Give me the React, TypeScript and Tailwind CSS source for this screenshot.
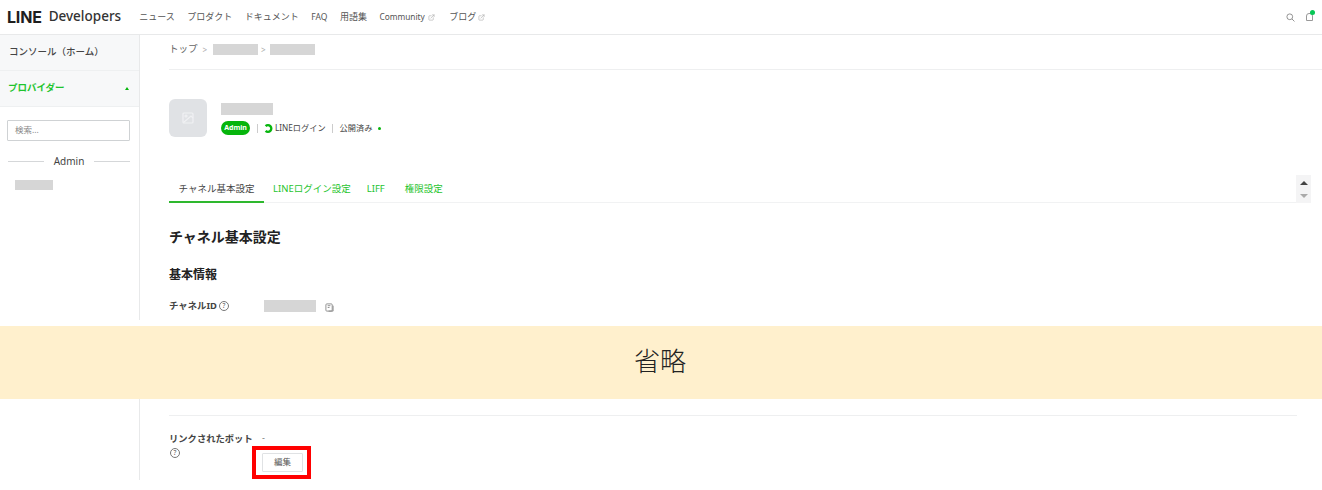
import { ExternalLink } from "lucide-react"

const font = { fontFamily: '"Noto Sans", "Noto Sans CJK JP", sans-serif' }

function Mask({ className }: { className: string }) {
    return <div className={`bg-[#d6d6d6] ${className}`} />
}

function Help({ className = "" }: { className?: string }) {
    return (
        <span className={`flex size-[10px] items-center justify-center rounded-full border border-[#777] text-[6.5px] leading-none text-[#555] ${className}`}>
            ?
        </span>
    )
}

function Header() {
    const links = ["ニュース", "プロダクト", "ドキュメント"]
    return (
        <header className="flex h-[35px] items-center border-b border-[#e8e9ea] bg-white pl-[7px] pr-[9px]">
            <span className="text-[16px] font-bold leading-none tracking-[-0.2px] text-[#1e1e1e] [font-family:Inter,sans-serif]">LINE</span>
            <span className="ml-[7px] text-[13.5px] font-medium leading-none text-[#333]">Developers</span>
            <nav className="ml-[18px] flex items-center gap-[12.5px] text-[9px] text-[#555]">
                {links.map((l) => (
                    <span key={l}>{l}</span>
                ))}
                <span className="text-[8.5px]">FAQ</span>
                <span>用語集</span>
                <span className="flex items-center gap-[3px] text-[8.3px]">
                    Community <ExternalLink className="size-[7px] text-[#aaa]" />
                </span>
                <span className="ml-[2px] flex items-center gap-[2px]">
                    ブログ <ExternalLink className="size-[7px] text-[#aaa]" />
                </span>
            </nav>
            <div className="ml-auto flex items-center gap-[11px]">
                <svg width="9" height="9" viewBox="0 0 10 10" fill="none" stroke="#888" strokeWidth="1">
                    <circle cx="4.2" cy="4.2" r="3.2" />
                    <path d="M6.6 6.6 9.4 9.4" />
                </svg>
                <span className="relative block h-[8px] w-[7px] rounded-t-[3px] border border-[#999]">
                    <span className="absolute -right-[3px] -top-[4px] size-[5px] rounded-full bg-[#06c755]" />
                </span>
            </div>
        </header>
    )
}

function Sidebar() {
    return (
        <aside className="w-[140px] shrink-0 border-r border-[#e8e9ea]">
            <div className="flex h-[36px] items-center border-b border-[#eef0f1] bg-[#f7f8f9] pl-[9px] text-[9.5px] font-medium text-[#444]">
                コンソール（ホーム）
            </div>
            <div className="flex h-[36px] items-center justify-between border-b border-[#eef0f1] bg-[#f7f8f9] pl-[8px] pr-[10px] text-[9.5px] font-bold text-[#1fc42e]">
                プロバイダー
                <span className="h-0 w-0 border-x-[2.5px] border-b-[3px] border-x-transparent border-b-[#06b50c]" />
            </div>
            <div className="ml-[7px] mr-[9px] mt-[13px] flex h-[21px] items-center rounded-[1px] border border-[#cfd2d4] pl-[7px] text-[8.5px] text-[#888]">
                検索...
            </div>
            <div className="ml-[8px] mr-[9px] mt-[13px] flex items-center gap-[10px] text-[10px] text-[#444]">
                <span className="h-px flex-1 bg-[#d5d7d9]" />
                Admin
                <span className="h-px flex-1 bg-[#d5d7d9]" />
            </div>
            <Mask className="ml-[15px] mt-[11px] h-[10px] w-[38px]" />
        </aside>
    )
}

function TopMain() {
    return (
        <main className="min-w-0 flex-1 pl-[29px]">
            <div className="flex h-[35px] items-center border-b border-[#eeeff0] pb-[5px] text-[9.5px] text-[#666]">
                <span>トップ</span>
                <span className="ml-[5px] text-[8px] text-[#aaa]">&gt;</span>
                <Mask className="ml-[6px] h-[11px] w-[45px]" />
                <span className="ml-[3px] text-[8px] text-[#aaa]">&gt;</span>
                <Mask className="ml-[4px] h-[11px] w-[45px]" />
            </div>
            <div className="pr-[11px]">
                <div className="mt-[29px] flex items-start gap-[14px]">
                    <div className="flex size-[38px] items-center justify-center rounded-[6px] bg-[#e0e2e5]">
                        <svg width="12" height="12" viewBox="0 0 12 12" fill="none" stroke="#f0f1f3" strokeWidth="1.2">
                            <rect x="1" y="1" width="10" height="10" rx="1" />
                            <circle cx="4" cy="4" r="1" />
                            <path d="M1.5 10.5 9 4l2 2" />
                        </svg>
                    </div>
                    <div className="mt-[4px] flex flex-col gap-[6px]">
                        <Mask className="h-[12px] w-[52px]" />
                        <div className="flex h-[14px] items-center text-[8.2px] text-[#444]">
                            <span className="flex h-[14px] w-[29px] items-center justify-center rounded-full bg-[#06b50c] text-[7px] font-bold text-white">Admin</span>
                            <span className="ml-[7px] h-[9px] w-px bg-[#ccc]" />
                            <svg className="ml-[6px]" width="9" height="9" viewBox="0 0 10 10" fill="none" stroke="#06b50c" strokeWidth="2.6">
                                <path d="M1.8 2.4A3.7 3.7 0 1 1 1.8 7.6" />
                            </svg>
                            <span className="ml-[2px]">LINEログイン</span>
                            <span className="ml-[6px] h-[9px] w-px bg-[#ccc]" />
                            <span className="ml-[7px]">公開済み</span>
                            <span className="ml-[6px] size-[3px] rounded-full bg-[#06b50c]" />
                        </div>
                    </div>
                </div>
                <div className="mt-[38px] flex items-end">
                    <div className="flex h-[25px] flex-1 border-b border-[#f1f2f3] text-[9.5px] text-[#1fc42e]">
                        <span className="h-[25px] w-[95px] border-b-2 border-[#2eb82e] pt-[4px] text-center text-[#444]">チャネル基本設定</span>
                        <span className="ml-[9px] pt-[4px]">LINEログイン設定</span>
                        <span className="ml-[16px] pt-[4px]">LIFF</span>
                        <span className="ml-[20px] pt-[4px]">権限設定</span>
                    </div>
                    <div className="flex h-[28px] w-[15px] flex-col items-center justify-center gap-[9px] bg-[#f4f4f5]">
                        <span className="h-0 w-0 border-x-[4px] border-b-[4px] border-x-transparent border-b-[#444]" />
                        <span className="h-0 w-0 border-x-[4px] border-t-[4px] border-x-transparent border-t-[#aaa]" />
                    </div>
                </div>
                <h1 className="mt-[24px] text-[14px] font-bold leading-[20px] text-[#222]">チャネル基本設定</h1>
                <h2 className="mt-[19px] text-[12px] font-bold leading-[18px] text-[#222]">基本情報</h2>
                <div className="mt-[15px] flex items-center">
                    <span className="text-[9.4px] font-bold text-[#444]">チャネルID</span>
                    <Help className="ml-[2px]" />
                    <Mask className="ml-[35px] h-[12px] w-[52px]" />
                    <svg className="ml-[9px] mt-[2px]" width="9" height="9" viewBox="0 0 10 10" fill="none" stroke="#888" strokeWidth="1">
                        <rect x="1" y="1" width="7" height="8" rx="1" />
                        <path d="M3 3h3M3 5h2M9 3v6H4" />
                    </svg>
                </div>
            </div>
        </main>
    )
}

export default function App() {
    return (
        <div className="flex h-[490px] w-full flex-col overflow-hidden bg-white" style={font}>
            <Header />
            <div className="flex h-[285px] overflow-hidden">
                <Sidebar />
                <TopMain />
            </div>
            <div className="mt-[6px] flex h-[73px] items-center justify-center bg-[#fff0cd] pb-[2px] pr-[2px] text-[26px] font-light text-[#222]">
                省略
            </div>
            <div className="flex h-[81px]">
                <div className="w-[140px] shrink-0 border-r border-[#e8e9ea]" />
                <div className="min-w-0 flex-1 pl-[29px] pr-[25px]">
                    <div className="mt-[16px] h-px bg-[#eeeff0]" />
                    <div className="flex">
                        <div className="w-[82px] shrink-0 pt-[15px]">
                            <div className="whitespace-nowrap text-[9.3px] font-bold leading-[16px] text-[#444]">リンクされたボット</div>
                            <Help className="ml-px mt-[1px]" />
                        </div>
                        <div className="ml-[1px]">
                            <div className="pl-[10px] pt-[14px] text-[9px] leading-[16px] text-[#777]">-</div>
                            <div className="flex h-[33px] w-[59px] items-center justify-center border-[4px] border-[#ff0000] pl-[2px]">
                                <span className="flex h-[19px] w-[41px] items-center justify-center rounded-[1px] border border-[#e0e2e4] text-[8.5px] text-[#555]">編集</span>
                            </div>
                        </div>
                    </div>
                </div>
            </div>
        </div>
    )
}
